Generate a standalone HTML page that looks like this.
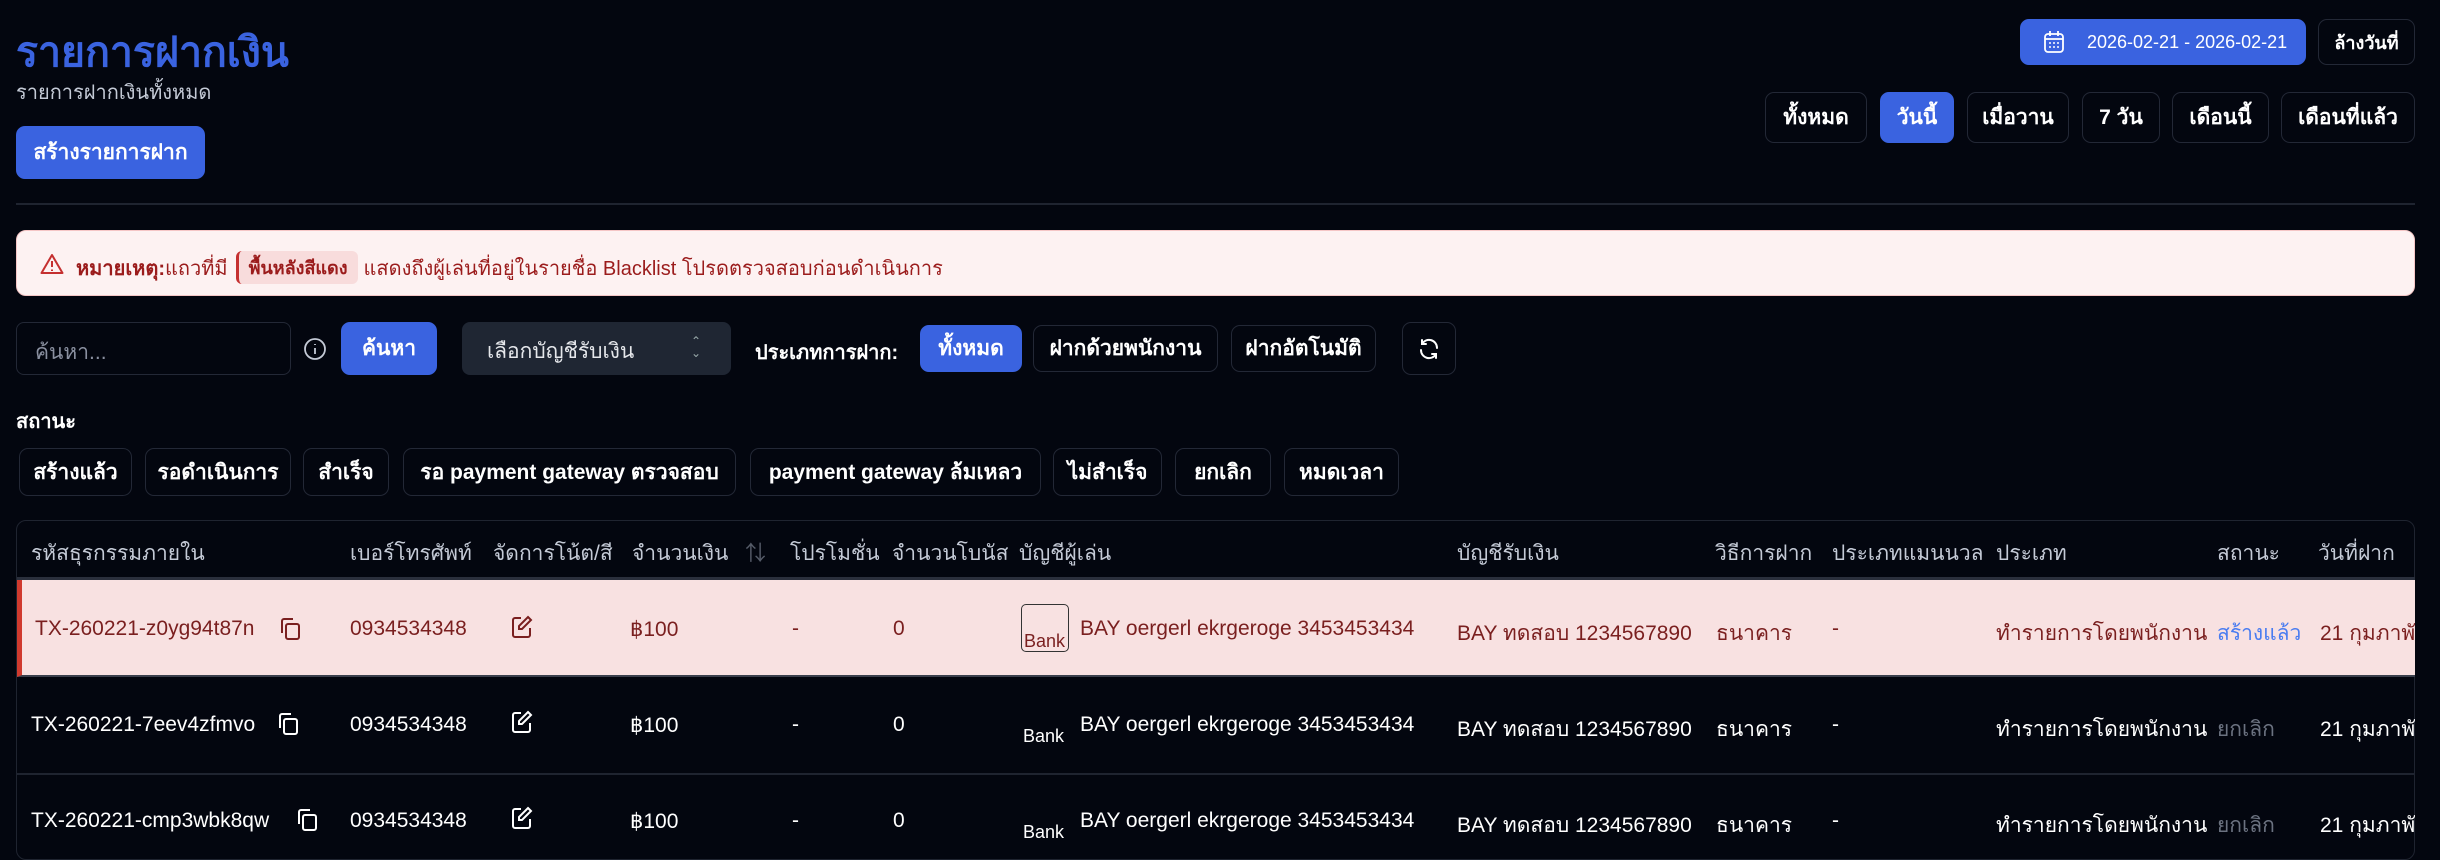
<!DOCTYPE html>
<html><head><meta charset="utf-8"><style>
*{box-sizing:border-box;margin:0;padding:0}
body{width:2440px;height:850px;overflow:hidden;background:#03060f;color:#fff;font-family:"Liberation Sans","Noto Sans CJK SC",sans-serif;position:relative}
.a{position:absolute;white-space:nowrap}
.btn{position:absolute;border:1.5px solid #232836;border-radius:9px;background:#03060f;color:#fff;font-size:21px;font-weight:bold;display:flex;align-items:center;justify-content:center;white-space:nowrap}
.blue{background:#3a63e0;border-color:#3a63e0}
.th{position:absolute;top:537px;font-size:21px;color:#c4cad6;white-space:nowrap}
.c{position:absolute;font-size:21px;white-space:nowrap}
.r1{color:#7a1f1f}
.img{position:absolute;width:48px;height:48px;border:1.5px solid #555;border-radius:5px;overflow:hidden;font-size:18px;padding-top:26px;padding-left:2px}
</style></head><body>
<div class="a" style="left:16px;top:20px;font-size:41px;font-weight:bold;color:#3a63e0">รายการฝากเงิน</div>
<div class="a" style="left:16px;top:76px;font-size:20px;color:#c4cad6">รายการฝากเงินทั้งหมด</div>
<div class="btn blue" style="left:16px;top:126px;width:189px;height:53px">สร้างรายการฝาก</div>
<div class="a" style="left:16px;top:203px;width:2399px;height:2px;background:#1f2430"></div>

<div class="btn blue" style="left:2020px;top:19px;width:286px;height:46px;justify-content:flex-start;padding-left:22px">
<svg width="22" height="24" viewBox="0 0 22 24" fill="none" stroke="#fff" stroke-width="1.8"><rect x="2" y="4" width="18" height="18" rx="3"/><path d="M2 9h18M7 1v5M15 1v5"/><path d="M6 13h2M10 13h2M14 13h2M6 17h2M10 17h2M14 17h2" stroke-width="1.4"/></svg>
<span style="margin-left:22px;font-size:18px;font-weight:normal">2026-02-21 - 2026-02-21</span></div>
<div class="btn" style="left:2318px;top:19px;width:97px;height:46px;font-size:18px">ล้างวันที่</div>
<div class="btn" style="left:1765px;top:92px;width:102px;height:51px">ทั้งหมด</div>
<div class="btn blue" style="left:1880px;top:92px;width:74px;height:51px">วันนี้</div>
<div class="btn" style="left:1967px;top:92px;width:102px;height:51px">เมื่อวาน</div>
<div class="btn" style="left:2082px;top:92px;width:78px;height:51px">7 วัน</div>
<div class="btn" style="left:2172px;top:92px;width:97px;height:51px">เดือนนี้</div>
<div class="btn" style="left:2281px;top:92px;width:134px;height:51px">เดือนที่แล้ว</div>

<div class="a" style="left:16px;top:230px;width:2399px;height:66px;background:#fdf2f2;border:1.5px solid #f5c6c6;border-radius:10px"></div>
<svg class="a" style="left:40px;top:253px" width="24" height="22" viewBox="0 0 24 22" fill="none" stroke="#c53030" stroke-width="2"><path d="M12 2L1.5 20h21z" stroke-linejoin="round"/><path d="M12 8v6M12 16.5v1.5"/></svg>
<div class="a" style="left:76px;top:251px;font-size:20px;color:#9b1c1c;display:flex;align-items:center"><b>หมายเหตุ:</b>แถวที่มี <span style="margin:0 6px 0 8px;background:#f8dcdc;border-left:3px solid #c53030;border-radius:6px;padding:2px 10px;font-size:18px"><b>พื้นหลังสีแดง</b></span> แสดงถึงผู้เล่นที่อยู่ในรายชื่อ Blacklist โปรดตรวจสอบก่อนดำเนินการ</div>

<div class="a" style="left:16px;top:322px;width:275px;height:53px;border:1.5px solid #232836;border-radius:8px;color:#8a90a0;font-size:21px;padding:13px 18px">ค้นหา...</div>
<svg class="a" style="left:303px;top:337px" width="24" height="24" viewBox="0 0 24 24" fill="none" stroke="#c4cad6" stroke-width="1.8"><circle cx="12" cy="12" r="10"/><path d="M12 11v6M12 7v1"/></svg>
<div class="btn blue" style="left:341px;top:322px;width:96px;height:53px">ค้นหา</div>
<div class="a" style="left:462px;top:322px;width:269px;height:53px;background:#1f2633;border-radius:8px;font-size:21px;color:#e5e7eb;padding:13px 25px">เลือกบัญชีรับเงิน<span style="position:absolute;right:30px;top:13px;font-size:12px;line-height:12px;color:#9aa">⌃<br>⌄</span></div>
<div class="a" style="left:755px;top:336px;font-size:20px;font-weight:bold">ประเภทการฝาก:</div>
<div class="btn blue" style="left:920px;top:325px;width:102px;height:47px">ทั้งหมด</div>
<div class="btn" style="left:1033px;top:325px;width:185px;height:47px">ฝากด้วยพนักงาน</div>
<div class="btn" style="left:1231px;top:325px;width:145px;height:47px">ฝากอัตโนมัติ</div>
<div class="btn" style="left:1402px;top:322px;width:54px;height:53px"><svg width="24" height="24" viewBox="0 0 24 24" fill="none" stroke="#fff" stroke-width="2" stroke-linecap="round"><path d="M20 11A8 8 0 0 0 5 7M4 13a8 8 0 0 0 15 4"/><path d="M5 3v4h4M19 21v-4h-4"/></svg></div>

<div class="a" style="left:16px;top:405px;font-size:20px;font-weight:bold">สถานะ</div>
<div class="btn" style="left:19px;top:448px;width:113px;height:48px">สร้างแล้ว</div>
<div class="btn" style="left:145px;top:448px;width:146px;height:48px">รอดำเนินการ</div>
<div class="btn" style="left:303px;top:448px;width:86px;height:48px">สำเร็จ</div>
<div class="btn" style="left:403px;top:448px;width:333px;height:48px">รอ payment gateway ตรวจสอบ</div>
<div class="btn" style="left:750px;top:448px;width:291px;height:48px">payment gateway ล้มเหลว</div>
<div class="btn" style="left:1053px;top:448px;width:109px;height:48px">ไม่สำเร็จ</div>
<div class="btn" style="left:1175px;top:448px;width:96px;height:48px">ยกเลิก</div>
<div class="btn" style="left:1284px;top:448px;width:115px;height:48px">หมดเวลา</div>

<div class="a" style="left:16px;top:520px;width:2399px;height:340px;border:1.5px solid #1f2430;border-radius:10px"></div>
<div class="a" style="left:17px;top:577px;width:2398px;height:3px;background:#2a2f3c"></div>
<div class="th" style="left:31px">รหัสธุรกรรมภายใน</div>
<div class="th" style="left:350px">เบอร์โทรศัพท์</div>
<div class="th" style="left:493px">จัดการโน้ต/สี</div>
<div class="th" style="left:632px">จำนวนเงิน</div>
<div class="th" style="left:745px;color:#555b68">⇅</div>
<div class="th" style="left:790px">โปรโมชั่น</div>
<div class="th" style="left:892px">จำนวนโบนัส</div>
<div class="th" style="left:1019px">บัญชีผู้เล่น</div>
<div class="th" style="left:1457px">บัญชีรับเงิน</div>
<div class="th" style="left:1715px">วิธีการฝาก</div>
<div class="th" style="left:1832px">ประเภทแมนนวล</div>
<div class="th" style="left:1996px">ประเภท</div>
<div class="th" style="left:2217px">สถานะ</div>
<div class="th" style="left:2318px">วันที่ฝาก</div>

<div class="a" style="left:17px;top:580px;width:2398px;height:97px;background:#f8e1e1;border-left:5px solid #d03a2e;border-bottom:2px solid #3a3f4c"></div>
<div class="a" style="left:17px;top:773px;width:2398px;height:2px;background:#1f2430"></div>

<div class="c r1" style="left:35px;top:617px">TX-260221-z0yg94t87n</div>
<svg class="a" style="left:279px;top:617px" width="22" height="24" viewBox="0 0 22 24" fill="none" stroke="#7a1f1f" stroke-width="2"><rect x="7" y="7" width="13" height="15" rx="2"/><path d="M3 16V4a2 2 0 0 1 2-2h9"/></svg>
<div class="c r1" style="left:350px;top:617px">0934534348</div>
<svg class="a" style="left:511px;top:615px" width="22" height="24" viewBox="0 0 22 24" fill="none" stroke="#7a1f1f" stroke-width="2"><path d="M10 3H4a2 2 0 0 0-2 2v15a2 2 0 0 0 2 2h13a2 2 0 0 0 2-2v-7"/><path d="M17 2l3 3-9 9H8v-3z"/></svg>
<div class="c r1" style="left:630px;top:617px">฿100</div>
<div class="c r1" style="left:792px;top:617px">-</div>
<div class="c r1" style="left:893px;top:617px">0</div>
<div class="img r1" style="left:1021px;top:604px;border-color:#333">Bank</div>
<div class="c r1" style="left:1080px;top:617px">BAY oergerl ekrgeroge 3453453434</div>
<div class="c r1" style="left:1457px;top:617px">BAY ทดสอบ 1234567890</div>
<div class="c r1" style="left:1716px;top:617px">ธนาคาร</div>
<div class="c r1" style="left:1832px;top:617px">-</div>
<div class="c r1" style="left:1996px;top:617px">ทำรายการโดยพนักงาน</div>
<div class="c" style="left:2217px;top:617px;color:#4a7cf0">สร้างแล้ว</div>
<div class="c r1" style="left:2320px;top:617px">21 กุมภาพันธ์</div>

<div class="c" style="left:31px;top:713px">TX-260221-7eev4zfmvo</div>
<svg class="a" style="left:277px;top:712px" width="22" height="24" viewBox="0 0 22 24" fill="none" stroke="#fff" stroke-width="2"><rect x="7" y="7" width="13" height="15" rx="2"/><path d="M3 16V4a2 2 0 0 1 2-2h9"/></svg>
<div class="c" style="left:350px;top:713px">0934534348</div>
<svg class="a" style="left:511px;top:710px" width="22" height="24" viewBox="0 0 22 24" fill="none" stroke="#fff" stroke-width="2"><path d="M10 3H4a2 2 0 0 0-2 2v15a2 2 0 0 0 2 2h13a2 2 0 0 0 2-2v-7"/><path d="M17 2l3 3-9 9H8v-3z"/></svg>
<div class="c" style="left:630px;top:713px">฿100</div>
<div class="c" style="left:792px;top:713px">-</div>
<div class="c" style="left:893px;top:713px">0</div>
<div class="img" style="left:1021px;top:700px;border:none">Bank</div>
<div class="c" style="left:1080px;top:713px">BAY oergerl ekrgeroge 3453453434</div>
<div class="c" style="left:1457px;top:713px">BAY ทดสอบ 1234567890</div>
<div class="c" style="left:1716px;top:713px">ธนาคาร</div>
<div class="c" style="left:1832px;top:713px">-</div>
<div class="c" style="left:1996px;top:713px">ทำรายการโดยพนักงาน</div>
<div class="c" style="left:2217px;top:713px;color:#6b7280">ยกเลิก</div>
<div class="c" style="left:2320px;top:713px">21 กุมภาพันธ์</div>

<div class="c" style="left:31px;top:809px">TX-260221-cmp3wbk8qw</div>
<svg class="a" style="left:296px;top:808px" width="22" height="24" viewBox="0 0 22 24" fill="none" stroke="#fff" stroke-width="2"><rect x="7" y="7" width="13" height="15" rx="2"/><path d="M3 16V4a2 2 0 0 1 2-2h9"/></svg>
<div class="c" style="left:350px;top:809px">0934534348</div>
<svg class="a" style="left:511px;top:806px" width="22" height="24" viewBox="0 0 22 24" fill="none" stroke="#fff" stroke-width="2"><path d="M10 3H4a2 2 0 0 0-2 2v15a2 2 0 0 0 2 2h13a2 2 0 0 0 2-2v-7"/><path d="M17 2l3 3-9 9H8v-3z"/></svg>
<div class="c" style="left:630px;top:809px">฿100</div>
<div class="c" style="left:792px;top:809px">-</div>
<div class="c" style="left:893px;top:809px">0</div>
<div class="img" style="left:1021px;top:796px;border:none">Bank</div>
<div class="c" style="left:1080px;top:809px">BAY oergerl ekrgeroge 3453453434</div>
<div class="c" style="left:1457px;top:809px">BAY ทดสอบ 1234567890</div>
<div class="c" style="left:1716px;top:809px">ธนาคาร</div>
<div class="c" style="left:1832px;top:809px">-</div>
<div class="c" style="left:1996px;top:809px">ทำรายการโดยพนักงาน</div>
<div class="c" style="left:2217px;top:809px;color:#6b7280">ยกเลิก</div>
<div class="c" style="left:2320px;top:809px">21 กุมภาพันธ์</div>
<div class="a" style="left:2415px;top:520px;width:25px;height:330px;background:#03060f"></div>
</body></html>
